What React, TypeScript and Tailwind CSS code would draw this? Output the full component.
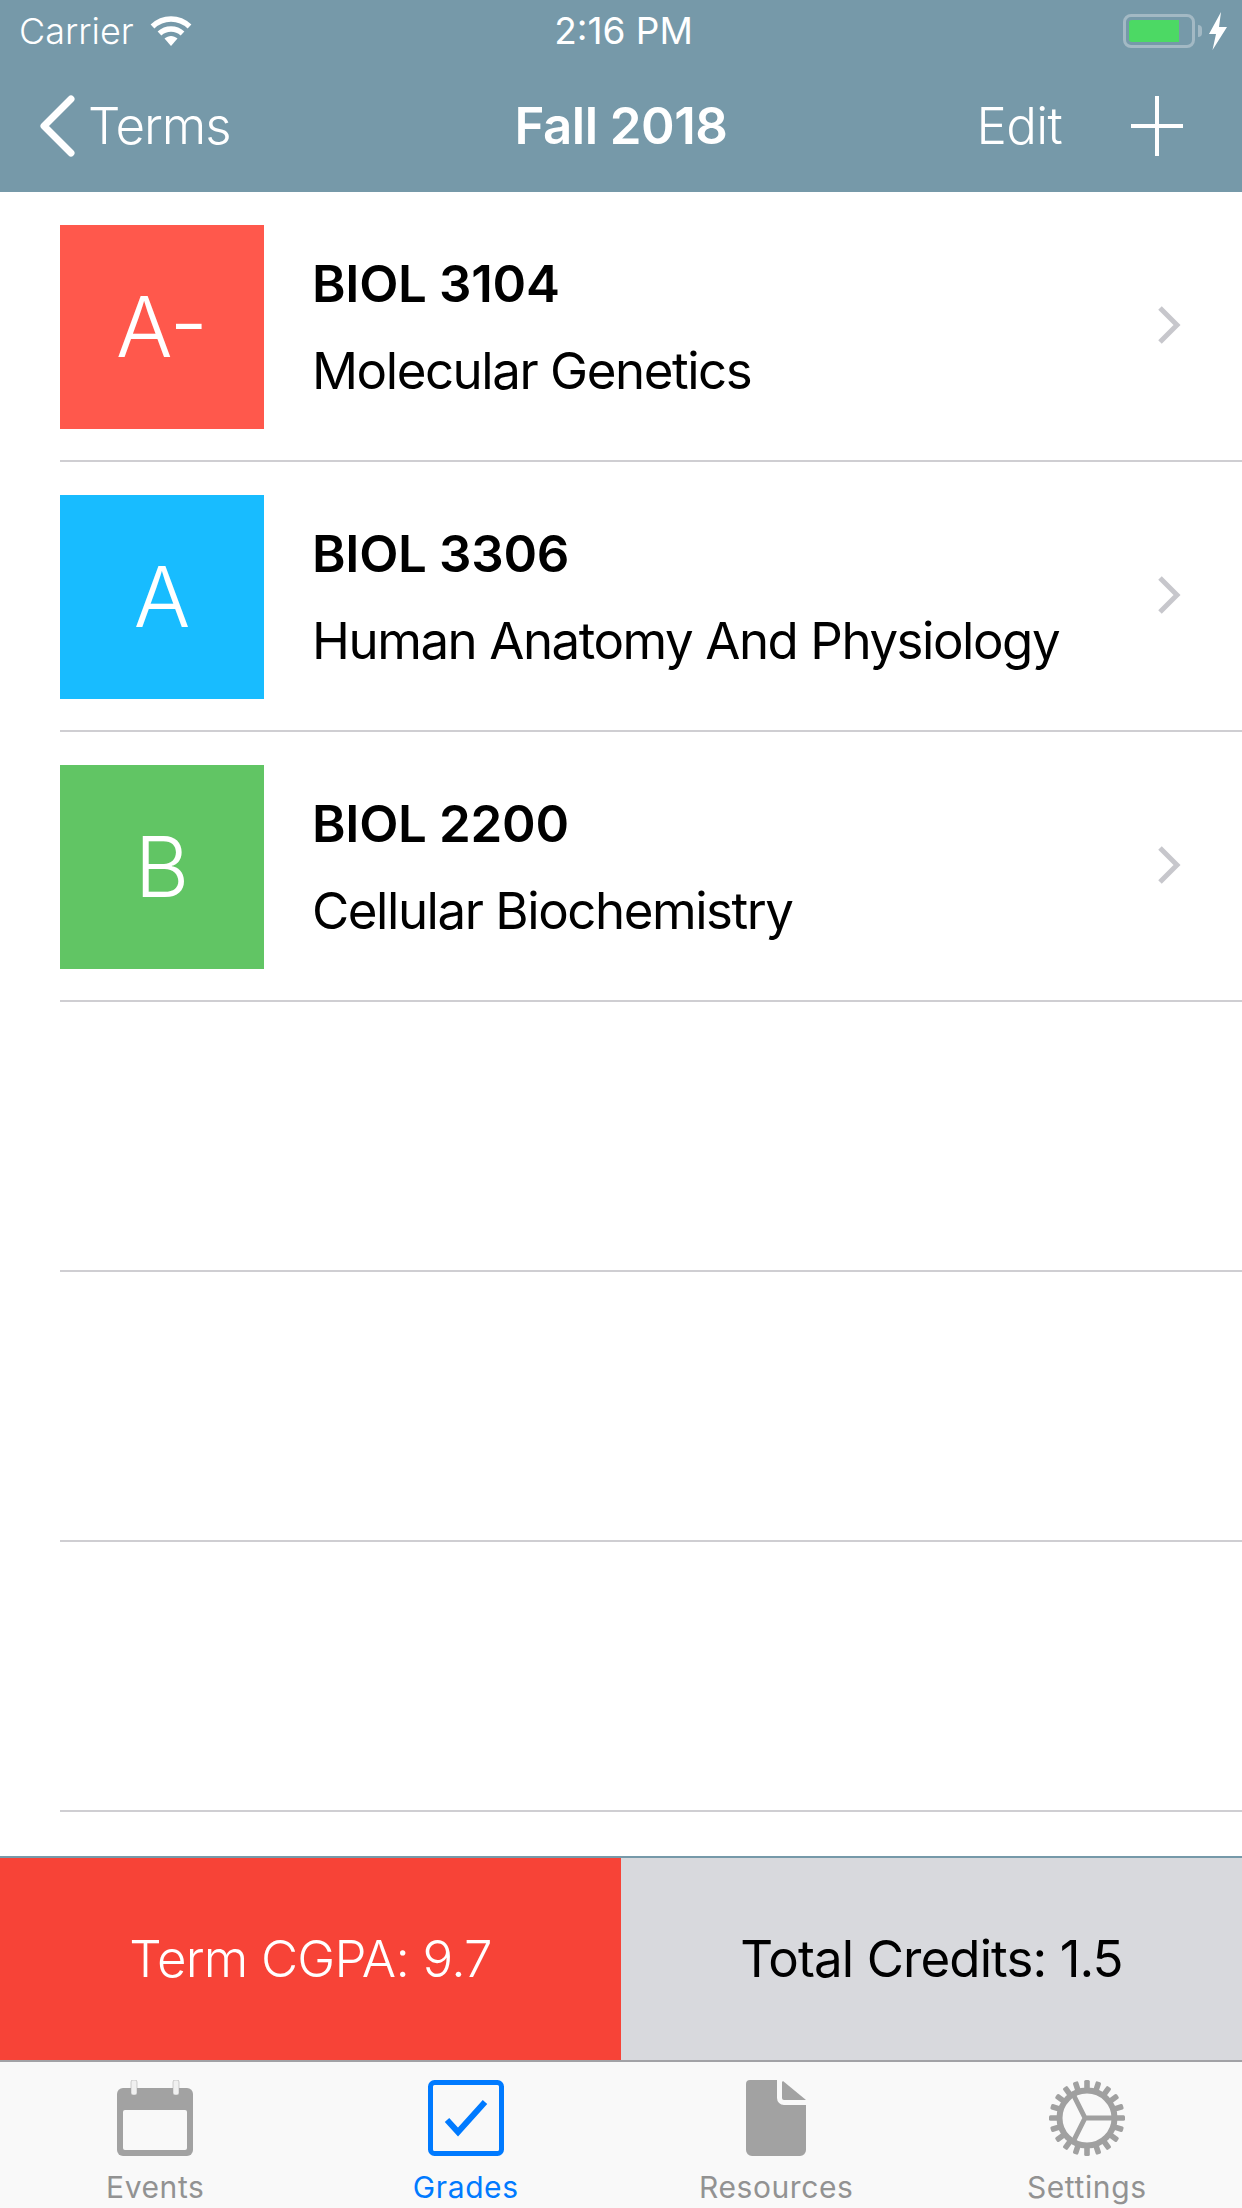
import React from "react";

const font = { fontFamily: "Inter, 'Liberation Sans', sans-serif" };

function Wifi() {
  return (
    <svg width="42" height="30" viewBox="0 0 42 30" fill="none" className="block">
      <path d="M2.5 10.5C13 .5 29 .5 39.500 10.500" stroke="#fff" strokeWidth="5.500" strokeLinecap="butt" />
      <path d="M9.500 17.500C16 11.500 26 11.500 32.500 17.500" stroke="#fff" strokeWidth="5.500" />
      <path d="M14.500 22.500C18.500 19 23.500 19 27.500 22.500L21 30Z" fill="#fff" />
    </svg>
  );
}

function Battery() {
  return (
    <div className="flex items-center">
      <div className="w-[72px] h-[34px] rounded-[8px] border-[3px] border-[#a3b9c4] p-[3px] flex">
        <div className="w-[50px] h-full bg-[#4cd964] rounded-l-[3px]" />
      </div>
      <div className="ml-[3px] w-[4px] h-[12px] bg-[#a3b9c4] rounded-r-[4px]" />
      <svg width="20" height="38" viewBox="0 0 20 38" className="ml-[6px] block">
        <path d="M13 0L1 22H8L4.500 38L19 15H11Z" fill="#fff" />
      </svg>
    </div>
  );
}

function Chevron() {
  return (
    <svg width="24" height="38" viewBox="0 0 24 38" fill="none" className="block -translate-y-[2px]">
      <path d="M3 2L20 19L3 36" stroke="#c7c7cc" strokeWidth="5" />
    </svg>
  );
}

function Row({ grade, color, code, name }: { grade?: string; color?: string; code?: string; name?: string }) {
  return (
    <div className="h-[270px] ml-[60px] pt-[2px] border-b-[2px] border-[#cfced2] flex items-center shrink-0">
      {grade ? (
        <>
          <div className={`w-[204px] h-[204px] flex items-center justify-center text-white text-[84px] font-light ${color}`}>{grade}</div>
          <div className="ml-[48px] flex-1 text-black">
            <div className="text-[51px] leading-[58px] font-semibold tracking-[-0.3px]">{code}</div>
            <div className="mt-[29px] text-[51px] leading-[58px] tracking-[-1.45px]">{name}</div>
          </div>
          <div className="mr-[61px]"><Chevron /></div>
        </>
      ) : null}
    </div>
  );
}

function Gear() {
  const teeth = Array.from({ length: 20 }, (_, i) => i * 18);
  return (
    <svg width="76" height="76" viewBox="0 0 76 76" fill="none" className="block">
      {teeth.map((a) => (
        <rect key={a} x="35.200" y="0" width="5.600" height="11" rx="1.500" fill="#a0a0a0" transform={`rotate(${a} 38 38)`} />
      ))}
      <circle cx="38" cy="38" r="27.500" stroke="#a0a0a0" strokeWidth="6" />
      <path d="M36 38L64 38M36 38L23 12M36 38L23 64" stroke="#a0a0a0" strokeWidth="5" />
    </svg>
  );
}

function Tab({ label, active, children }: { label: string; active?: boolean; children: React.ReactNode }) {
  return (
    <div className="flex-1 flex flex-col items-center pt-[18px]">
      <div className="h-[76px] flex items-center justify-center">{children}</div>
      <div className={`mt-[13px] text-[30px] leading-[36px] tracking-[0.6px] ${active ? "text-[#007aff]" : "text-[#929292]"}`}>{label}</div>
    </div>
  );
}

export default function App() {
  return (
    <div className="w-[1242px] h-[2208px] flex flex-col bg-white overflow-hidden" style={font}>
      <div className="h-[192px] bg-[#7699a9] text-white shrink-0 flex flex-col">
        <div className="h-[62px] flex items-center justify-between pl-[19px] pr-[14px] relative">
          <div className="flex items-center gap-[16px]">
            <span className="text-[36px] font-light">Carrier</span>
            <Wifi />
          </div>
          <span className="absolute left-[5px] right-0 text-center text-[37px] font-normal">2:16 PM</span>
          <Battery />
        </div>
        <div className="h-[128px] flex items-center relative pl-[38px] pr-[59px]">
          <svg width="40" height="64" viewBox="0 0 40 64" fill="none" className="block">
            <path d="M33 5L6 32L33 59" stroke="#fff" strokeWidth="7" strokeLinecap="round" strokeLinejoin="round" />
          </svg>
          <span className="ml-[10px] text-[51px] font-light tracking-[-1px]">Terms</span>
          <span className="absolute left-0 right-0 text-center text-[51px] font-semibold tracking-[-0.5px]">Fall 2018</span>
          <span className="ml-auto text-[51px] font-light tracking-[-0.7px]">Edit</span>
          <svg width="52" height="60" viewBox="0 0 52 60" fill="none" className="ml-[69px] block">
            <path d="M26 0V60M0 30H52" stroke="#fff" strokeWidth="4" />
          </svg>
        </div>
      </div>

      <div className="flex-1 flex flex-col overflow-hidden">
        <Row grade="A-" color="bg-[#ff584c]" code="BIOL 3104" name="Molecular Genetics" />
        <Row grade="A" color="bg-[#18bcff]" code="BIOL 3306" name="Human Anatomy And Physiology" />
        <Row grade="B" color="bg-[#61c564]" code="BIOL 2200" name="Cellular Biochemistry" />
        <Row />
        <Row />
        <Row />
      </div>

      <div className="h-[204px] shrink-0 flex border-t-[2px] border-[#7699a9] text-[51px] font-light">
        <div className="flex-1 bg-[#f74337] text-white flex items-center justify-center tracking-[-0.8px]">Term CGPA: 9.7</div>
        <div className="flex-1 bg-[#d8d9dd] text-black flex items-center justify-center font-normal tracking-[-0.9px]">Total Credits: 1.5</div>
      </div>

      <div className="h-[148px] shrink-0 bg-[#f9f9f9] border-t-[2px] border-[#a2a2a6] flex">
        <Tab label="Events">
          <svg width="76" height="76" viewBox="0 0 76 76" fill="none" className="block">
            <path d="M6 8H70A6 6 0 0 1 76 14V70A6 6 0 0 1 70 76H6A6 6 0 0 1 0 70V14A6 6 0 0 1 6 8Z" fill="#a2a2a2" />
            <rect x="6" y="30" width="64" height="40" rx="2" fill="#f9f9f9" />
            <rect x="14" y="0" width="6" height="15" rx="2" fill="#f0f0f0" stroke="#a2a2a2" strokeWidth="0.500" />
            <rect x="56" y="0" width="6" height="15" rx="2" fill="#f0f0f0" stroke="#a2a2a2" strokeWidth="0.500" />
          </svg>
        </Tab>
        <Tab label="Grades" active>
          <svg width="76" height="76" viewBox="0 0 76 76" fill="none" className="block">
            <rect x="2.500" y="2.500" width="71" height="71" rx="4" stroke="#007aff" strokeWidth="5" />
            <path d="M19 40L30 52L57 22" stroke="#007aff" strokeWidth="6" />
          </svg>
        </Tab>
        <Tab label="Resources">
          <svg width="60" height="76" viewBox="0 0 60 76" fill="none" className="block">
            <path d="M4 0H31V18A7 7 0 0 0 38 25H60V70A6 6 0 0 1 54 76H6A6 6 0 0 1 0 70V4A4 4 0 0 1 4 0Z" fill="#a2a2a2" />
            <path d="M37 1L60 20H38A2 2 0 0 1 36 18V2Z" fill="#a2a2a2" />
          </svg>
        </Tab>
        <Tab label="Settings"><Gear /></Tab>
      </div>
    </div>
  );
}
